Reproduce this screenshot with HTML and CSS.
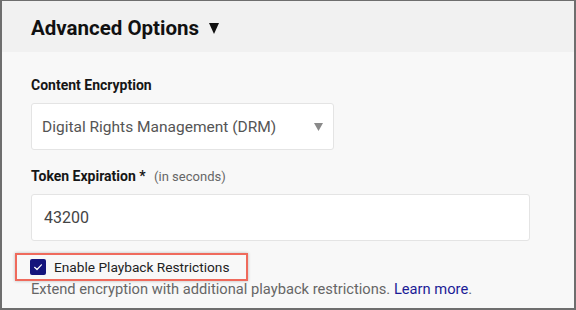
FILE: index.html
```html
<!DOCTYPE html>
<html>
<head>
<meta charset="utf-8">
<link rel="stylesheet" href="styles.css">
</head>
<body>
<div class="frame">
  <div class="header">
    <h1 class="title">Advanced Options</h1>
    <svg class="caret" viewBox="0 0 10 11" width="10" height="11"><path d="M0 0 H10 L5 11 Z" fill="#111"/></svg>
  </div>
  <div class="content">
    <div class="field">
      <label class="label">Content Encryption</label>
      <div class="select">
        <span>Digital Rights Management (DRM)</span>
        <svg class="select-arrow" viewBox="0 0 9 8" width="9" height="8"><path d="M0 0 H9 L4.5 8 Z" fill="#8a8a8a"/></svg>
      </div>
    </div>
    <div class="field">
      <label class="label">Token Expiration * <span class="hint">(in seconds)</span></label>
      <div class="input">43200</div>
    </div>
    <div class="highlight">
      <span class="checkbox">
        <svg viewBox="0 0 16 16" width="16" height="16"><path d="M4.6 8.3 L7 10.5 L11.4 5.8" fill="none" stroke="#fff" stroke-width="1.2" stroke-linecap="round" stroke-linejoin="round"/></svg>
      </span>
      <span class="check-label">Enable Playback Restrictions</span>
    </div>
    <p class="help">Extend encryption with additional playback restrictions. <a class="link" href="#">Learn more</a>.</p>
  </div>
</div>
</body>
</html>
```

FILE: styles.css
```css
html, body {
  margin: 0;
  padding: 0;
}
body {
  font-family: Roboto, "Noto Sans", sans-serif;
  color: #1a1a1a;
}
.frame {
  width: 576px;
  height: 310px;
  box-sizing: border-box;
  border-top: 1px solid #6e6e6e;
  border-left: 2px solid #6e6e6e;
  border-right: 2px solid #6e6e6e;
  border-bottom: 2px solid #6e6e6e;
  background: #f8f8f8;
  overflow: hidden;
}
.header {
  height: 51px;
  box-sizing: border-box;
  background: #f1f1f1;
  display: flex;
  align-items: center;
  gap: 10px;
  padding: 3px 0 0 29px;
}
.title {
  margin: 0;
  font-size: 20.5px;
  font-weight: 700;
  color: #111;
}
.caret {
  display: block;
  margin-top: 1px;
}
.content {
  padding: 25px 0 0 29px;
}
.field {
  margin-bottom: 18px;
}
.label {
  display: block;
  font-size: 14px;
  font-weight: 700;
  color: #161616;
  line-height: 17px;
  margin-bottom: 9px;
}
.hint {
  font-weight: 400;
  color: #666;
  font-size: 13px;
  margin-left: 5px;
}
.select {
  width: 303px;
  height: 47px;
  box-sizing: border-box;
  background: #fff;
  border: 1px solid #e4e4e4;
  border-radius: 3px;
  display: flex;
  align-items: center;
  justify-content: space-between;
  padding: 0 10px 0 10px;
  font-size: 15.5px;
  color: #555;
}
.select-arrow {
  display: block;
}
.input {
  width: 499px;
  height: 47px;
  box-sizing: border-box;
  background: #fff;
  border: 1px solid #e4e4e4;
  border-radius: 3px;
  display: flex;
  align-items: center;
  padding-left: 12px;
  font-size: 16px;
  color: #444;
}
.highlight {
  display: inline-flex;
  align-items: center;
  margin-left: -16px;
  margin-top: -6px;
  height: 28px;
  width: 233px;
  box-sizing: border-box;
  border: 2px solid #ef6a5c;
  box-shadow: 0 0 3px rgba(0,0,0,0.25);
  padding-left: 13px;
  white-space: nowrap;
}
.checkbox {
  width: 16px;
  height: 16px;
  background: #14147c;
  border-radius: 2px;
  display: inline-flex;
  margin-right: 8px;
}
.check-label {
  font-size: 13.7px;
  color: #222;
}
.help {
  margin: 0;
  font-size: 14.7px;
  color: #666;
  line-height: 16px;
}
.link {
  color: #1c1c96;
  text-decoration: none;
}
```
